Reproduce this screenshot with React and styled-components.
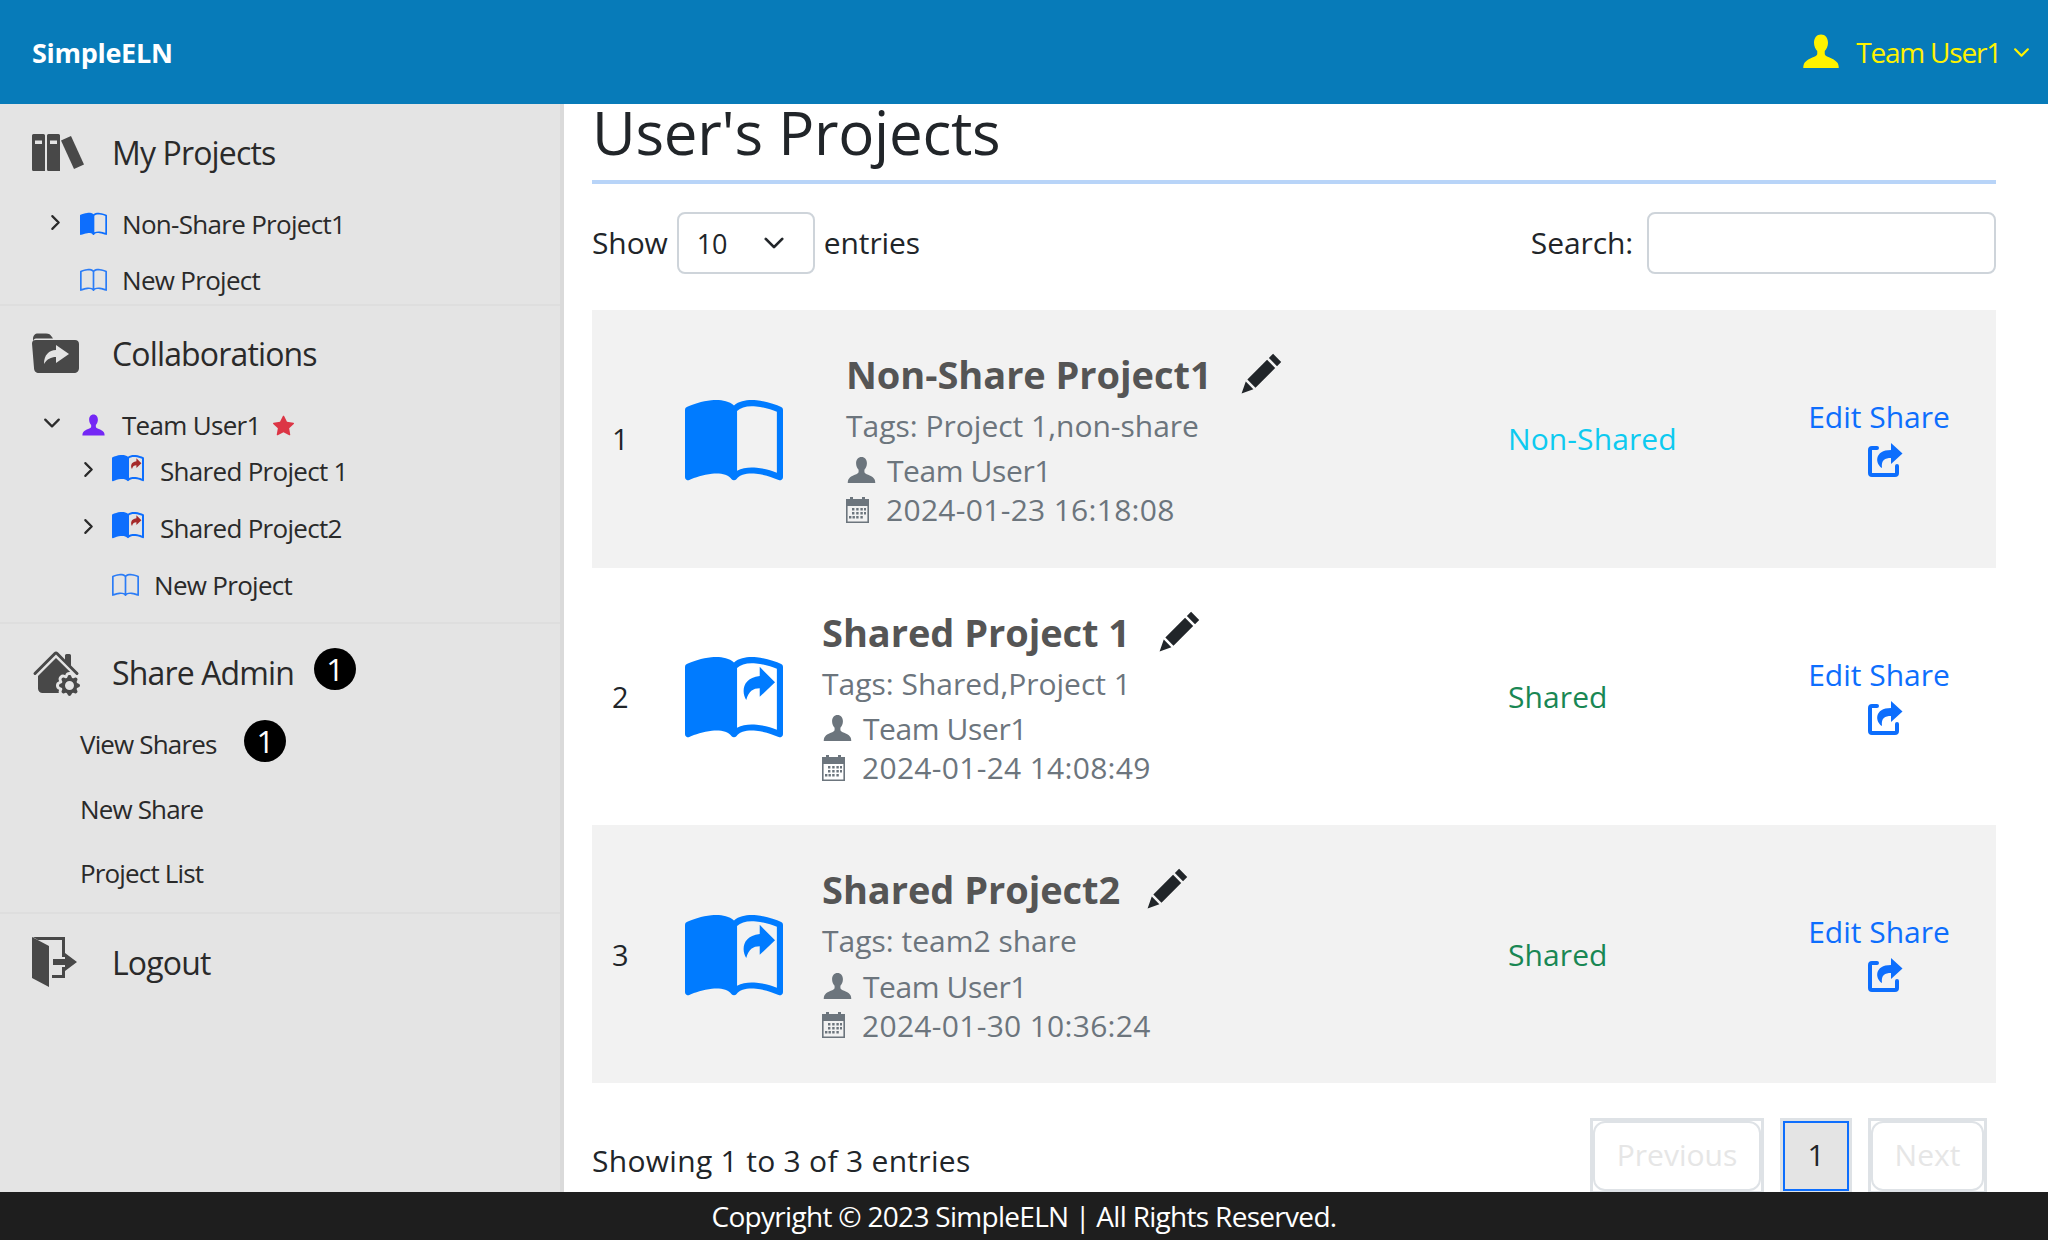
import React from 'react';
import styled, { createGlobalStyle } from 'styled-components';
import { BsChevronRight, BsChevronDown, BsStarFill, BsHouseGearFill } from 'react-icons/bs';

const BOOK_FRAME =
  'M8 1.783C7.015.936 5.587.81 4.287.94c-1.514.153-3.042.672-3.994 1.105A.5.5 0 0 0 0 2.5v11a.5.5 0 0 0 .707.455c.882-.4 2.303-.881 3.68-1.02 1.409-.142 2.59.087 3.223.877a.5.5 0 0 0 .78 0c.633-.79 1.814-1.019 3.222-.877 1.378.139 2.8.62 3.681 1.02A.5.5 0 0 0 16 13.5v-11a.5.5 0 0 0-.293-.455c-.952-.433-2.48-.952-3.994-1.105C10.413.809 8.985.936 8 1.783z';
const BOOK_RIGHT =
  'M8.5 2.687c.654-.689 1.782-.886 3.112-.752 1.234.124 2.503.523 3.388.893v9.923c-.918-.35-2.107-.692-3.287-.81-1.094-.111-2.278-.039-3.213.492V2.687z';
const BOOK_LEFT =
  'M1 2.828c.885-.37 2.154-.769 3.388-.893 1.33-.134 2.458.063 3.112.752v9.746c-.935-.53-2.12-.603-3.213-.493-1.18.12-2.37.461-3.287.811V2.828z';

const Book = ({ size, color, half, arrow }) => (
  <svg width={size} height={size * 0.9} viewBox="0 0.4 16 14.4" fill={color} fillRule="evenodd">
    <path d={half ? BOOK_FRAME + BOOK_RIGHT : BOOK_FRAME + BOOK_RIGHT + BOOK_LEFT} />
    {arrow && <path d="M12.2 2.5 14.7 5 12.2 7.4V6c-1.1 0-1.8.5-2.2 1.9-.8-1.2-.7-3.6 2.2-3.9z" fill={arrow} />}
  </svg>
);

const Person = ({ size, color }) => (
  <svg width={size} height={size} viewBox="0 0 16 16" fill={color}>
    <path d="M8 1C6.3 1 5.2 2.4 5.2 4.3c0 1.4.6 2.6 1.3 3.3v1.2C6.5 10 3 10.3 1.5 12.2 1.1 12.7.9 13.5.9 14.4h14.2c0-.9-.2-1.7-.6-2.2C13 10.3 9.5 10 9.5 8.8V7.6c.7-.7 1.3-1.9 1.3-3.3C10.8 2.4 9.7 1 8 1z" />
  </svg>
);

const Calendar = ({ color }) => (
  <svg width="23" height="26" viewBox="0 0 23 26" fill={color}>
    <path d="M0 2h4V0h3v2h9V0h3v2h4v24H0V2zm1.6 7v15.4h19.8V9H1.6z" />
    <path d="M6 11h2.4v2.4H6zM10.2 11h2.4v2.4h-2.4zM14.4 11h2.4v2.4h-2.4zM18 11h2v2.4h-2zM6 15h2.4v2.4H6zM10.2 15h2.4v2.4h-2.4zM14.4 15h2.4v2.4h-2.4zM18 15h2v2.4h-2zM3 19h2.4v2.4H3zM6.5 19h2.4v2.4H6.5zM10.2 19h2.4v2.4h-2.4zM14.4 19h2.4v2.4h-2.4z" />
  </svg>
);

const Pencil = () => (
  <svg width="42" height="42" viewBox="0 0 16 16" fill="#212529">
    <path d="M12.6.3 15.7 3.4 14.1 5 11 1.9zM10.3 2.6 13.4 5.7 5.9 13.2 2.8 10.1zM2.2 10.9 5.1 13.8 0.6 15.4z" />
  </svg>
);

const ShareBox = () => (
  <svg width="36" height="34" viewBox="0 0 36 34">
    <path d="M10 5H5a2 2 0 0 0-2 2v23a2 2 0 0 0 2 2h23a2 2 0 0 0 2-2v-7" fill="none" stroke="#0d6efd" strokeWidth="4" strokeLinecap="round" />
    <path d="M24 0l11.500 10.500L24 21v-6c-6 0-10 2-9 10-7-4-8-18 9-18z" fill="#0d6efd" />
  </svg>
);

const Books = () => (
  <svg width="52" height="37" viewBox="0 0 52 37" fill="#484848">
    <path
      fillRule="evenodd"
      d="M1.5 0h10A1.5 1.5 0 0 1 13 1.5V37H1.5A1.5 1.5 0 0 1 0 35.5v-34A1.5 1.5 0 0 1 1.5 0zM3 6.500v3.500h7V6.500zM16.500 0h10A1.500 1.500 0 0 1 28 1.500V37H16.500a1.500 1.500 0 0 1-1.500-1.500v-34A1.500 1.500 0 0 1 16.500 0zM18 6.500v3.500h7V6.500z"
    />
    <path d="M29 6.500 39 2l13 28.500-10 4.500z" />
  </svg>
);

const SharedFolder = () => (
  <svg width="47" height="40" viewBox="0 0 47 40">
    <path
      fill="#484848"
      d="M1 6C1 2.500 3 .5 6 .5h8c3 0 4.500 1 6 3.500l1 1.500h-17C2.500 5.500 1.500 6.500 1 8zM0 10.500C0 8 1.500 7 4 7h39c2.500 0 4 1.500 4 4v24c0 3-2 5-5 5H7c-3 0-5-2-5-5z"
    />
    <path fill="#e4e4e4" d="M24 12l13 9-13 9v-6c-5 0-9 2-12 7 0-9 5-14 12-14z" />
  </svg>
);

const Door = () => (
  <svg width="46" height="50" viewBox="0 0 46 50" fill="#484848">
    <path d="M0 0 17 9V50L0 41zM1 0H33V20H30V3H6zM20 38H30V30H33V41H20zM21 22H33V16L45 25 33 34V28H21z" />
  </svg>
);

const GlobalStyle = createGlobalStyle`
  html, body {
    margin: 0;
    height: 100%;
    overflow: hidden;
  }
  body {
    font-family: "Open Sans", "Noto Sans", sans-serif;
    color: #212529;
  }
  * {
    box-sizing: border-box;
  }
`;

const Page = styled.div`
  height: 1240px;
  display: flex;
  flex-direction: column;
`;

const Header = styled.header`
  flex: 0 0 104px;
  position: relative;
  z-index: 1;
  background: #077bb9;
  display: flex;
  align-items: center;
  justify-content: space-between;
  padding: 0 18px 0 32px;
`;

const Logo = styled.div`
  color: #fff;
  font-size: 27px;
  font-weight: 700;
  letter-spacing: -0.3px;
`;

const UserMenu = styled.div`
  display: flex;
  align-items: center;
  color: #fff200;
  font-size: 28px;
  letter-spacing: -1.2px;
  svg:first-child {
    margin-right: 15px;
  }
  svg:last-child {
    margin-left: 12px;
  }
`;

const Content = styled.div`
  flex: 1;
  display: flex;
  min-height: 0;
`;

const Sidebar = styled.nav`
  flex: 0 0 564px;
  background: #e4e4e4;
  border-right: 4px solid #dadada;
`;

const Section = styled.div`
  padding-top: ${p => p.$top}px;
  padding-bottom: ${p => p.$bottom}px;
  border-bottom: ${p => (p.$last ? 'none' : '2px solid #dedede')};
`;

const SectionHead = styled.div`
  height: 64px;
  display: flex;
  align-items: center;
  padding-left: 32px;
  font-size: 32px;
  letter-spacing: -0.85px;
  color: #2a2a2a;
`;

const HeadIcon = styled.span`
  flex: 0 0 80px;
  display: flex;
  align-items: center;
`;

const Badge = styled.span`
  width: 42px;
  height: 42px;
  border-radius: 50%;
  background: #000;
  color: #fff;
  display: flex;
  align-items: center;
  justify-content: center;
  font-size: 31px;
  letter-spacing: 0;
  margin-left: ${p => p.$left}px;
  margin-top: -6px;
`;

const TreeRow = styled.div`
  height: ${p => p.$height || 44}px;
  margin-top: ${p => p.$top || 0}px;
  display: flex;
  align-items: center;
  font-size: 26px;
  letter-spacing: -0.7px;
  color: #2a2a2a;
  padding-left: ${p => p.$indent}px;
`;

const Chevron = styled.span`
  flex: 0 0 ${p => p.$width}px;
  display: flex;
  align-items: center;
  margin: -4px 0 0 -3px;
`;

const TreeIcon = styled.span`
  flex: 0 0 ${p => p.$width}px;
  display: flex;
  align-items: center;
  margin-top: ${p => p.$lift || 0}px;
`;

const Star = styled.span`
  display: flex;
  margin-left: 12px;
  color: #dc3545;
`;

const AdminLink = styled.div`
  height: ${p => p.$height || 64}px;
  margin-top: ${p => p.$top || 0}px;
  display: flex;
  align-items: center;
  padding-left: 80px;
  font-size: 26px;
  letter-spacing: -0.85px;
  color: #2a2a2a;
`;

const Main = styled.main`
  flex: 1;
  min-width: 0;
  padding: 0 52px 0 28px;
`;

const Title = styled.h1`
  margin: 0;
  height: 80px;
  line-height: 56px;
  font-size: 60px;
  font-weight: 400;
  letter-spacing: -0.25px;
  color: #212529;
  border-bottom: 4px solid #b8d4f8;
`;

const Controls = styled.div`
  height: 62px;
  margin-top: 28px;
  display: flex;
  align-items: center;
  justify-content: space-between;
  font-size: 30px;
  letter-spacing: -0.1px;
`;

const ControlGroup = styled.label`
  display: flex;
  align-items: center;
  margin-top: -2px;
`;

const PageSize = styled.div`
  width: 138px;
  height: 62px;
  margin: 2px 9px 0;
  padding: 0 28px 0 18px;
  display: flex;
  align-items: center;
  justify-content: space-between;
  border: 2px solid #ced4da;
  border-radius: 8px;
  font-size: 27px;
`;

const SearchInput = styled.input`
  width: 349px;
  height: 62px;
  margin: 2px 0 0 14px;
  border: 2px solid #ced4da;
  border-radius: 8px;
  background: #fff;
`;

const Table = styled.div`
  margin-top: 36px;
`;

const Row = styled.div`
  height: 257.7px;
  display: grid;
  grid-template-columns: 93px 137px 686px 300px 1fr;
  align-items: center;
  background: ${p => (p.$striped ? '#f2f2f2' : '#fff')};
`;

const RowIndex = styled.div`
  padding-left: 20px;
  font-size: 29px;
`;

const RowIcon = styled.div`
  display: flex;
  align-items: center;
  margin-top: 4px;
`;

const Info = styled.div`
  padding-top: 2px;
  padding-left: ${p => p.$indent}px;
  color: #6c757d;
`;

const ProjectName = styled.h2`
  margin: 0;
  display: flex;
  align-items: center;
  height: 48px;
  font-size: 38px;
  font-weight: 700;
  letter-spacing: -0.05px;
  color: #555;
  svg {
    margin-left: ${p => p.$gap}px;
  }
`;

const Tags = styled.div`
  margin-top: 8px;
  font-size: 30px;
  letter-spacing: 0;
  line-height: 40px;
`;

const Meta = styled.div`
  display: flex;
  align-items: center;
  height: 40px;
  margin-top: ${p => p.$top}px;
  font-size: 30px;
  letter-spacing: ${p => p.$spacing}px;
  svg {
    flex: 0 0 auto;
    margin-right: ${p => p.$gap}px;
  }
`;

const Status = styled.div`
  font-size: 30px;
  letter-spacing: 0.1px;
  color: ${p => (p.$shared ? '#198754' : '#0dcaf0')};
`;

const EditShare = styled.a`
  display: inline-flex;
  flex-direction: column;
  align-items: center;
  width: 142px;
  padding-bottom: 4px;
  font-size: 30px;
  letter-spacing: 0;
  color: #0d6efd;
  line-height: 40px;
  white-space: nowrap;
  svg {
    margin: 6px 0 0 12px;
  }
`;

const Bottom = styled.div`
  margin-top: 35px;
  padding-right: 9px;
  display: flex;
  align-items: flex-start;
  justify-content: space-between;
`;

const EntryCount = styled.div`
  padding-top: 22px;
  font-size: 30px;
  letter-spacing: 0.3px;
`;

const Pager = styled.div`
  display: flex;
  gap: 16px;
`;

const PageItem = styled.div`
  border: 3px solid #dee2e6;
  height: 76px;
`;

const PageLink = styled.div`
  width: ${p => p.$width}px;
  height: 70px;
  padding-bottom: 3px;
  display: flex;
  align-items: center;
  justify-content: center;
  font-size: 30px;
  letter-spacing: 0;
  color: ${p => (p.$active ? '#212529' : '#e6e6e6')};
  background: ${p => (p.$active ? '#e4e4e4' : '#fff')};
  border: ${p => (p.$active ? '2px solid #0d6efd' : '2px solid #dee2e6')};
  border-radius: ${p => (p.$active ? '0' : '12px')};
`;

const Footer = styled.footer`
  flex: 0 0 48px;
  position: relative;
  z-index: 1;
  background: #1e1e1e;
  color: #fff;
  font-size: 28px;
  letter-spacing: -0.7px;
  display: flex;
  align-items: center;
  justify-content: center;
`;

const projects = [
  { name: 'Non-Share Project1', tags: 'Project 1,non-share', date: '2024-01-23 16:18:08', shared: false, indent: 24, gap: 28 },
  { name: 'Shared Project 1', tags: 'Shared,Project 1', date: '2024-01-24 14:08:49', shared: true, indent: 0, gap: 28 },
  { name: 'Shared Project2', tags: 'team2 share', date: '2024-01-30 10:36:24', shared: true, indent: 0, gap: 26 }
];

const App = () => (
  <Page>
    <GlobalStyle />
    <Header>
      <Logo>SimpleELN</Logo>
      <UserMenu>
        <Person size={40} color="#fff200" />
        Team User1
        <BsChevronDown size={17} strokeWidth={1} />
      </UserMenu>
    </Header>
    <Content>
      <Sidebar>
        <Section $top={16} $bottom={0}>
          <SectionHead>
            <HeadIcon><Books /></HeadIcon>
            My Projects
          </SectionHead>
          <TreeRow $height={52} $top={14} $indent={50}>
            <Chevron $width={33}><BsChevronRight size={17} strokeWidth={1} /></Chevron>
            <TreeIcon $width={42}><Book size={27} color="#0d6efd" half /></TreeIcon>
            Non-Share Project1
          </TreeRow>
          <TreeRow $height={48} $top={6} $indent={80}>
            <TreeIcon $width={42}><Book size={27} color="#2b7cf6" /></TreeIcon>
            New Project
          </TreeRow>
        </Section>
        <Section $top={15} $bottom={15}>
          <SectionHead>
            <HeadIcon><SharedFolder /></HeadIcon>
            Collaborations
          </SectionHead>
          <TreeRow $top={18} $indent={46}>
            <Chevron $width={38}><BsChevronDown size={18} strokeWidth={1} /></Chevron>
            <TreeIcon $width={41}><Person size={25} color="#7427f5" /></TreeIcon>
            Team User1
            <Star><BsStarFill size={21} /></Star>
          </TreeRow>
          <TreeRow $top={2} $indent={83}>
            <Chevron $width={32}><BsChevronRight size={17} strokeWidth={1} /></Chevron>
            <TreeIcon $width={48} $lift={-6}><Book size={32} color="#0d6efd" half arrow="#a52a2a" /></TreeIcon>
            Shared Project 1
          </TreeRow>
          <TreeRow $top={13} $indent={83}>
            <Chevron $width={32}><BsChevronRight size={17} strokeWidth={1} /></Chevron>
            <TreeIcon $width={48} $lift={-6}><Book size={32} color="#0d6efd" half arrow="#a52a2a" /></TreeIcon>
            Shared Project2
          </TreeRow>
          <TreeRow $top={13} $indent={112}>
            <TreeIcon $width={42}><Book size={27} color="#2b7cf6" /></TreeIcon>
            New Project
          </TreeRow>
        </Section>
        <Section $top={16} $bottom={7}>
          <SectionHead>
            <HeadIcon><BsHouseGearFill size={48} color="#484848" /></HeadIcon>
            Share Admin
            <Badge $left={20}>1</Badge>
          </SectionHead>
          <AdminLink $top={7} $height={66}>
            View Shares
            <Badge $left={28}>1</Badge>
          </AdminLink>
          <AdminLink>New Share</AdminLink>
          <AdminLink>Project List</AdminLink>
        </Section>
        <Section $top={16} $bottom={0} $last>
          <SectionHead>
            <HeadIcon><Door /></HeadIcon>
            Logout
          </SectionHead>
        </Section>
      </Sidebar>
      <Main>
        <Title>User's Projects</Title>
        <Controls>
          <ControlGroup>
            Show
            <PageSize>
              10
              <BsChevronDown size={22} strokeWidth={1} />
            </PageSize>
            entries
          </ControlGroup>
          <ControlGroup>
            Search:
            <SearchInput type="search" />
          </ControlGroup>
        </Controls>
        <Table>
          {projects.map((project, index) => (
            <Row key={project.name} $striped={index % 2 === 0}>
              <RowIndex>{index + 1}</RowIndex>
              <RowIcon>
                <Book size={98} color="#007bff" half arrow={project.shared ? '#007bff' : null} />
              </RowIcon>
              <Info $indent={project.indent}>
                <ProjectName $gap={project.gap}>
                  {project.name}
                  <Pencil />
                </ProjectName>
                <Tags>Tags: {project.tags}</Tags>
                <Meta $top={5} $gap={10} $spacing={-0.4}>
                  <Person size={31} color="#6c757d" />
                  Team User1
                </Meta>
                <Meta $top={-1} $gap={17} $spacing={0.3}>
                  <Calendar color="#6c757d" />
                  {project.date}
                </Meta>
              </Info>
              <Status $shared={project.shared}>{project.shared ? 'Shared' : 'Non-Shared'}</Status>
              <div>
                <EditShare>
                  Edit Share
                  <ShareBox />
                </EditShare>
              </div>
            </Row>
          ))}
        </Table>
        <Bottom>
          <EntryCount>Showing 1 to 3 of 3 entries</EntryCount>
          <Pager>
            <PageItem><PageLink $width={168}>Previous</PageLink></PageItem>
            <PageItem><PageLink $width={66} $active>1</PageLink></PageItem>
            <PageItem><PageLink $width={113}>Next</PageLink></PageItem>
          </Pager>
        </Bottom>
      </Main>
    </Content>
    <Footer>Copyright © 2023 SimpleELN | All Rights Reserved.</Footer>
  </Page>
);

export default App;
